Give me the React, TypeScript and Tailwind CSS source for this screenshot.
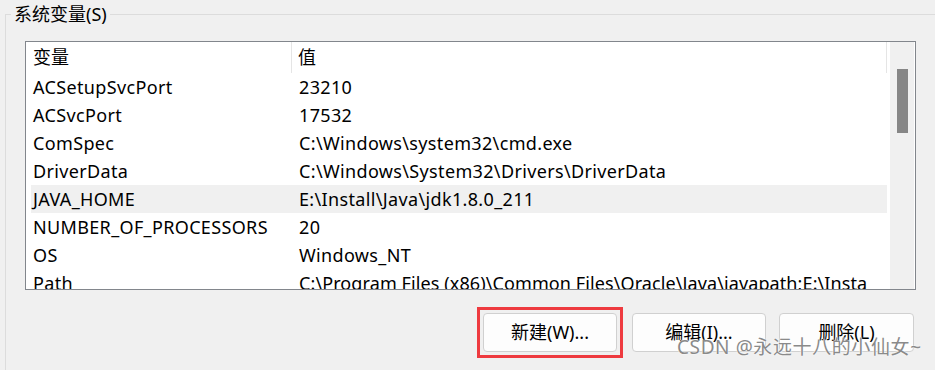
import React from "react";

const rows: [string, string][] = [
  ["ACSetupSvcPort", "23210"],
  ["ACSvcPort", "17532"],
  ["ComSpec", "C:\\Windows\\system32\\cmd.exe"],
  ["DriverData", "C:\\Windows\\System32\\Drivers\\DriverData"],
  ["JAVA_HOME", "E:\\Install\\Java\\jdk1.8.0_211"],
  ["NUMBER_OF_PROCESSORS", "20"],
  ["OS", "Windows_NT"],
  ["Path", "C:\\Program Files (x86)\\Common Files\\Oracle\\Java\\javapath;E:\\Insta"],
];

const font = { fontFamily: "'Noto Sans', 'Noto Sans CJK SC', sans-serif" };

export default function App() {
  return (
    <div
      className="relative w-[935px] h-[370px] overflow-hidden bg-[#f0f0f0] text-black"
      style={font}
    >
      <fieldset className="mt-[2px] ml-[5px] h-[400px] border-t border-l border-r-0 border-b-0 border-[#dcdcdc] p-0">
        <legend className="ml-[5px] px-[3px] text-[18px] leading-[24px]">系统变量(S)</legend>
        <div className="pl-[19px] pt-[15px]">
          <div className="flex w-[891px] h-[249px] border border-[#82868c] bg-white">
            <div className="flex-1 overflow-hidden flex flex-col">
              <div className="flex h-[31px] shrink-0 text-[18px] items-center">
                <div className="w-[266px] h-full pl-[7px] flex items-center border-r border-[#e5e5e5]">变量</div>
                <div className="w-[595px] h-full pl-[6px] flex items-center border-r border-[#e5e5e5]">值</div>
              </div>
              {rows.map(([k, v], i) => (
                <div
                  key={k}
                  className={
                    "flex h-[28px] shrink-0 items-center text-[18px] whitespace-nowrap " +
                    (i === 4 ? "ml-[5px] w-[856px] bg-[#f0f0f0]" : "")
                  }
                >
                  <div
                    className={
                      (i === 4 ? "w-[261px] pl-[2px]" : "w-[266px] pl-[7px]") +
                      " shrink-0 tracking-[0.35px]"
                    }
                  >
                    {k}
                  </div>
                  <div
                    className={
                      "w-[594px] pl-[7px] overflow-hidden " +
                      (i === 7 ? "tracking-[0.1px]" : "tracking-[0.35px]")
                    }
                  >
                    {v}
                  </div>
                </div>
              ))}
            </div>
            <div className="w-[25px] shrink-0 bg-[#f0f0f0] border-r border-white flex justify-center pt-[27px]">
              <div className="w-[11px] h-[64px] bg-[#868686]" />
            </div>
          </div>
          <div className="flex gap-[13px] mt-[23px] ml-[458px]">
            <div className="border-[3px] border-[#ee3a3f] p-[3px] -m-[6px]">
              <button className="w-[134px] h-[39px] rounded-[4px] border border-[#d0d0d0] bg-[#fdfdfd] text-[18px]">
                新建(W)...
              </button>
            </div>
            <button className="ml-[2px] w-[134px] h-[39px] rounded-[4px] border border-[#d0d0d0] bg-[#fdfdfd] text-[18px]">
              编辑(I)...
            </button>
            <button className="w-[135px] h-[39px] rounded-[4px] border border-[#d0d0d0] bg-[#fdfdfd] text-[18px]">
              删除(L)
            </button>
          </div>
        </div>
      </fieldset>
      <div
        className="absolute left-[677px] top-[334px] text-[19px] leading-[26px] tracking-[0.6px] text-[#8a8a8a] whitespace-nowrap"
        style={{ textShadow: "0 0 2px #ffffff, 0 0 1px #ffffff" }}
      >
        CSDN @永远十八的小仙女~
      </div>
    </div>
  );
}
